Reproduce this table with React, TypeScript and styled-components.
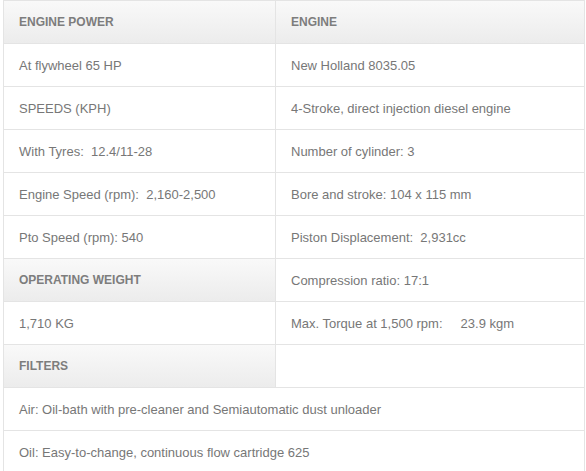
import React from "react";
import styled, { createGlobalStyle } from "styled-components";

const Global = createGlobalStyle`
  html, body { margin: 0; padding: 0; background: #fff; }
  body { font-family: "Liberation Sans", Arial, sans-serif; }
`;

const Sheet = styled.div`
  margin-left: 3px;
  width: 582px;
  box-sizing: border-box;
  display: grid;
  grid-template-columns: 272px 309px;
  grid-auto-rows: 43px;
  border-left: 1px solid #e4e4e4;
  border-top: 1px solid #e4e4e4;
`;

const Cell = styled.div<{ $head?: boolean; $wide?: boolean }>`
  box-sizing: border-box;
  display: flex;
  align-items: center;
  padding: 0 15px;
  border-right: 1px solid #e4e4e4;
  border-bottom: 1px solid #e4e4e4;
  white-space: pre;
  font-size: ${(p) => (p.$head ? "12px" : "13px")};
  font-weight: ${(p) => (p.$head ? 700 : 400)};
  color: ${(p) => (p.$head ? "#7d7d7d" : "#777")};
  background: ${(p) =>
    p.$head ? "linear-gradient(to bottom, #f9f9f9, #ececec)" : "#fff"};
  grid-column: ${(p) => (p.$wide ? "span 2" : "auto")};
`;

type C = { t: string; head?: boolean; wide?: boolean };

const rows: C[][] = [
  [{ t: "ENGINE POWER", head: true }, { t: "ENGINE", head: true }],
  [{ t: "At flywheel 65 HP" }, { t: "New Holland 8035.05" }],
  [{ t: "SPEEDS (KPH)" }, { t: "4-Stroke, direct injection diesel engine" }],
  [{ t: "With Tyres:  12.4/11-28" }, { t: "Number of cylinder: 3" }],
  [{ t: "Engine Speed (rpm):  2,160-2,500" }, { t: "Bore and stroke: 104 x 115 mm" }],
  [{ t: "Pto Speed (rpm): 540" }, { t: "Piston Displacement:  2,931cc" }],
  [{ t: "OPERATING WEIGHT", head: true }, { t: "Compression ratio: 17:1" }],
  [{ t: "1,710 KG" }, { t: "Max. Torque at 1,500 rpm:     23.9 kgm" }],
  [{ t: "FILTERS", head: true }, { t: "" }],
  [{ t: "Air: Oil-bath with pre-cleaner and Semiautomatic dust unloader", wide: true }],
  [{ t: "Oil: Easy-to-change, continuous flow cartridge 625", wide: true }],
];

export default function App() {
  return (
    <>
      <Global />
      <Sheet>
        {rows.flatMap((r, i) =>
          r.map((c, j) => (
            <Cell key={`${i}-${j}`} $head={c.head} $wide={c.wide}>
              {c.t}
            </Cell>
          ))
        )}
      </Sheet>
    </>
  );
}
